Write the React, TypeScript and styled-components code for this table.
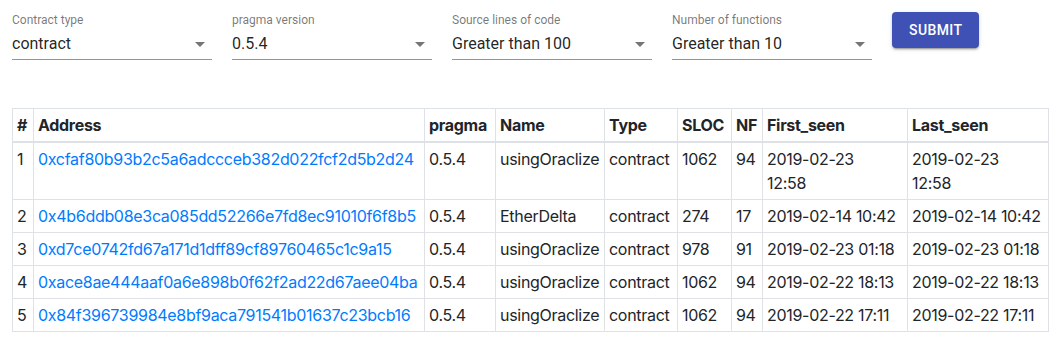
import React from "react";
import styled, { createGlobalStyle } from "styled-components";

const Global = createGlobalStyle`
  html, body { margin: 0; padding: 0; background: #fff; }
  body { font-family: Inter, "Noto Sans", sans-serif; color: #212529; }
  * { box-sizing: border-box; }
`;

const Page = styled.div`
  padding: 12px;
`;

const Filters = styled.form`
  display: flex;
  align-items: flex-start;
  gap: 20px;
  margin: 0 0 48px;
`;

const Field = styled.div`
  display: flex;
  flex-direction: column;
  width: 200px;
  font-family: Roboto, "Liberation Sans", sans-serif;
`;

const Label = styled.label`
  font-size: 12px;
  line-height: 12px;
  margin-top: 1.5px;
  height: 14.5px;
  color: rgba(0, 0, 0, 0.54);
`;

const SelectBox = styled.div`
  position: relative;
  height: 32px;
  display: flex;
  align-items: center;
  padding: 6px 24px 7px 0;
  border-bottom: 1px solid rgba(0, 0, 0, 0.42);
`;

const Value = styled.span`
  font-size: 16px;
  line-height: 19px;
  color: rgba(0, 0, 0, 0.87);
`;

const Arrow = styled.svg`
  position: absolute;
  right: 0;
  top: calc(50% - 12px);
  width: 24px;
  height: 24px;
  fill: rgba(0, 0, 0, 0.54);
`;

const SubmitButton = styled.button`
  height: 36px;
  min-width: 64px;
  padding: 6px 17px;
  border: 0;
  border-radius: 4px;
  background: #3f51b5;
  color: #fff;
  font-family: Roboto, "Liberation Sans", sans-serif;
  font-size: 14px;
  font-weight: 500;
  letter-spacing: 0.02857em;
  text-transform: uppercase;
  line-height: 1.75;
  box-shadow: 0 3px 1px -2px rgba(0, 0, 0, 0.2), 0 2px 2px 0 rgba(0, 0, 0, 0.14),
    0 1px 5px 0 rgba(0, 0, 0, 0.12);
  cursor: pointer;
`;

const Table = styled.table`
  width: 1036px;
  table-layout: fixed;
  border-collapse: collapse;
  font-size: 16px;
  line-height: 24px;
  letter-spacing: -0.3px;
  color: #212529;
`;

const Th = styled.th`
  text-align: left;
  font-weight: 700;
  padding: 4px;
  vertical-align: bottom;
  border: 1px solid #dee2e6;
  border-bottom-width: 2px;
  white-space: nowrap;
`;

const Td = styled.td`
  padding: 4px;
  vertical-align: top;
  border: 1px solid #dee2e6;
  white-space: nowrap;
`;

const Time = styled.span<{ $stacked?: boolean }>`
  display: ${(p) => (p.$stacked ? "block" : "inline")};
`;

const Link = styled.a`
  color: #007bff;
  text-decoration: none;
`;

const fields = [
  { label: "Contract type", value: "contract" },
  { label: "pragma version", value: "0.5.4" },
  { label: "Source lines of code", value: "Greater than 100" },
  { label: "Number of functions", value: "Greater than 10" },
];

const cols = [21, 391, 71, 109, 73, 54, 31, 145, 141];
const heads = ["#", "Address", "pragma", "Name", "Type", "SLOC", "NF", "First_seen", "Last_seen"];

type Row = {
  address: string;
  name: string;
  sloc: string;
  nf: string;
  date: string;
  time: string;
  stacked?: boolean;
};

const rows: Row[] = [
  { address: "0xcfaf80b93b2c5a6adccceb382d022fcf2d5b2d24", name: "usingOraclize", sloc: "1062", nf: "94", date: "2019-02-23", time: "12:58", stacked: true },
  { address: "0x4b6ddb08e3ca085dd52266e7fd8ec91010f6f8b5", name: "EtherDelta", sloc: "274", nf: "17", date: "2019-02-14", time: "10:42" },
  { address: "0xd7ce0742fd67a171d1dff89cf89760465c1c9a15", name: "usingOraclize", sloc: "978", nf: "91", date: "2019-02-23", time: "01:18" },
  { address: "0xace8ae444aaf0a6e898b0f62f2ad22d67aee04ba", name: "usingOraclize", sloc: "1062", nf: "94", date: "2019-02-22", time: "18:13" },
  { address: "0x84f396739984e8bf9aca791541b01637c23bcb16", name: "usingOraclize", sloc: "1062", nf: "94", date: "2019-02-22", time: "17:11" },
];

function Seen({ row }: { row: Row }) {
  return (
    <Td>
      {row.date} <Time $stacked={row.stacked}>{row.time}</Time>
    </Td>
  );
}

export default function App() {
  return (
    <Page>
      <Global />
      <Filters onSubmit={(e) => e.preventDefault()}>
        {fields.map((f) => (
          <Field key={f.label}>
            <Label>{f.label}</Label>
            <SelectBox>
              <Value>{f.value}</Value>
              <Arrow viewBox="0 0 24 24">
                <path d="M7 10l5 5 5-5z" />
              </Arrow>
            </SelectBox>
          </Field>
        ))}
        <SubmitButton type="submit">Submit</SubmitButton>
      </Filters>
      <Table>
        <colgroup>
          {cols.map((w, i) => (
            <col key={i} style={{ width: w }} />
          ))}
        </colgroup>
        <thead>
          <tr>
            {heads.map((h) => (
              <Th key={h}>{h}</Th>
            ))}
          </tr>
        </thead>
        <tbody>
          {rows.map((r, i) => (
            <tr key={r.address}>
              <Td>{i + 1}</Td>
              <Td>
                <Link href="#">{r.address}</Link>
              </Td>
              <Td>0.5.4</Td>
              <Td>{r.name}</Td>
              <Td>contract</Td>
              <Td>{r.sloc}</Td>
              <Td>{r.nf}</Td>
              <Seen row={r} />
              <Seen row={r} />
            </tr>
          ))}
        </tbody>
      </Table>
    </Page>
  );
}
